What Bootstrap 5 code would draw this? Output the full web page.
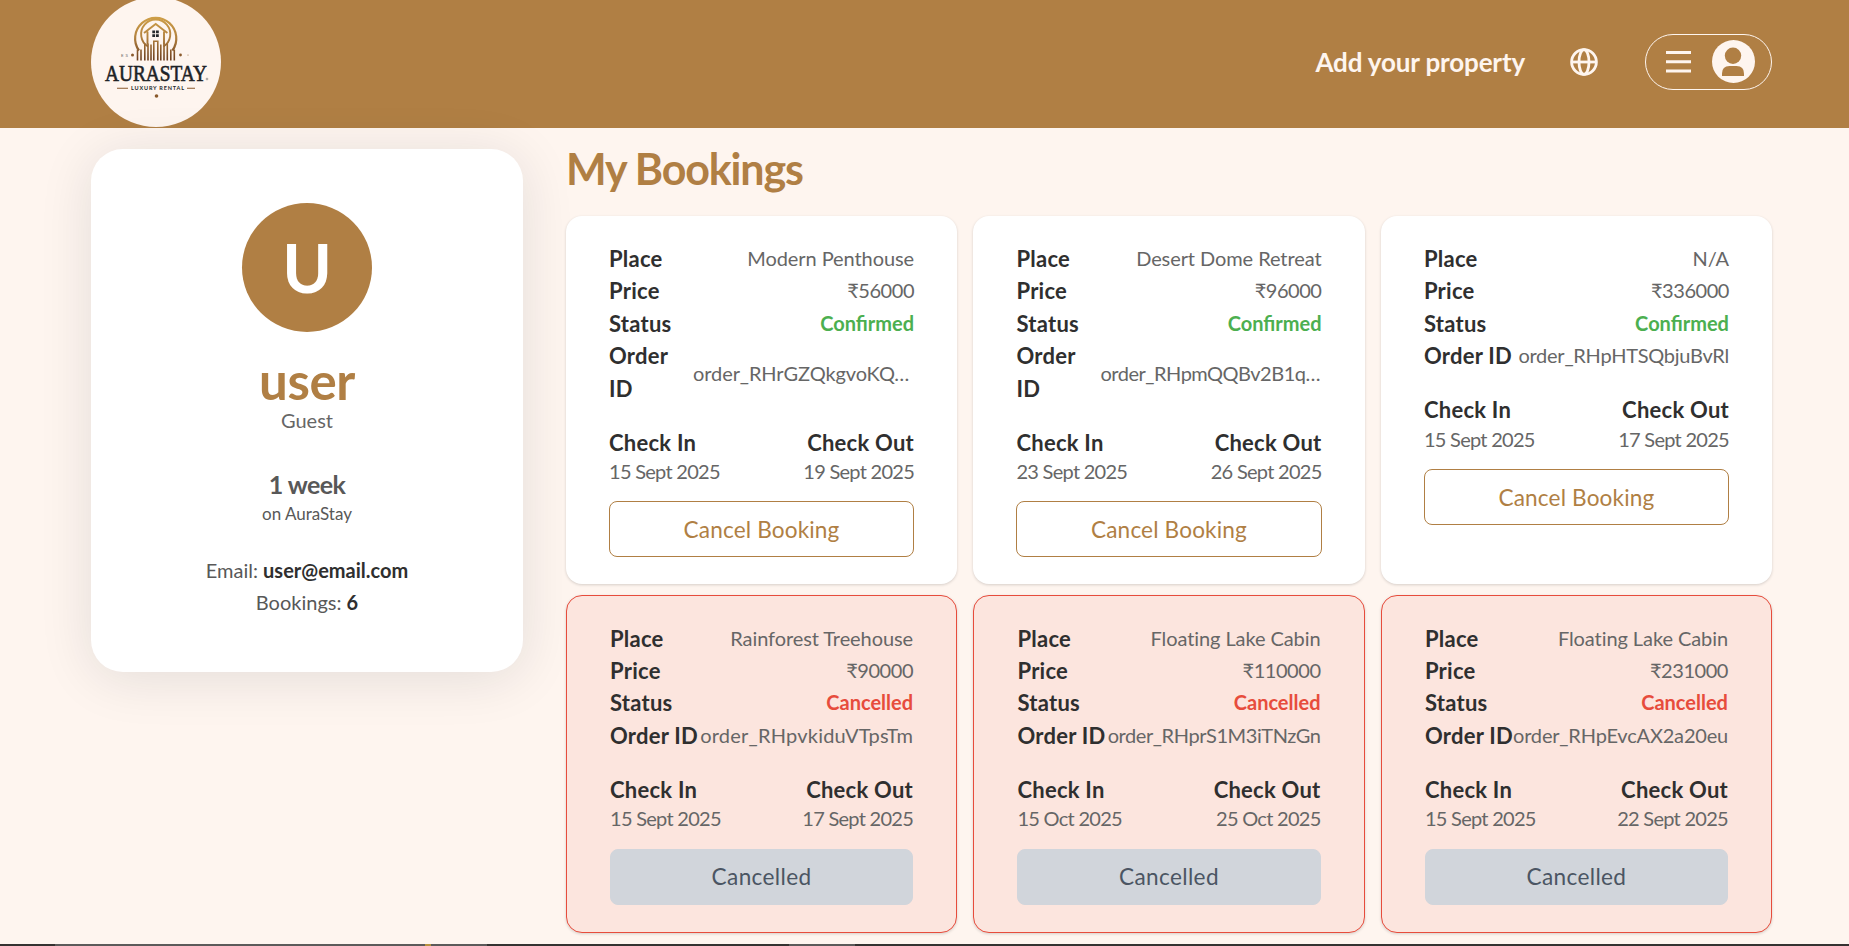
<!DOCTYPE html>
<html lang="en">
<head>
<meta charset="utf-8">
<title>AuraStay – My Bookings</title>
<meta name="viewport" content="width=device-width, initial-scale=1">
<link href="https://cdn.jsdelivr.net/npm/bootstrap@5.3.0/dist/css/bootstrap.min.css" rel="stylesheet">
<style>
:root{--brand:#b07f44;--cream:#fef5ef;--ink:#2f2f2f;--soft:#666}
html,body{height:946px;overflow:hidden}
body{background:var(--cream);font-family:Lato,"Open Sans",sans-serif;color:var(--ink);font-size:20px;line-height:32.4px}
.topbar{height:128px;background:var(--brand);padding:0 77px 4px 91px;color:var(--cream)}
.logo{width:130px;height:130px;margin-top:-1px;background:var(--cream)}
.logo svg{display:block;overflow:visible}
.add-link{font-size:26px;font-weight:700;letter-spacing:-.15px;color:var(--cream);margin-right:45px}
.menu-pill{width:127px;height:56px;border:1px solid var(--cream);padding:0 16px 0 20px;margin-left:47px}
.menu-pill .face{margin-bottom:1px}
.page{padding:21px 77px 0 91px;gap:43px;height:816px}
.profile{width:432px;height:523px;flex:none;border-radius:32px;background:#fff;padding-top:54px;box-shadow:0 6px 54px rgba(10,30,50,.11);color:#585858}
.avatar{width:130px;height:129px;background:var(--brand);color:#fff;font-size:67px;line-height:1;font-weight:700}
.uname{font-size:51px;font-weight:700;line-height:56px;letter-spacing:-.4px;color:var(--brand);margin-top:21px}
.guest{line-height:26px;color:var(--soft);margin-top:-2px}
.weeks{font-size:25px;font-weight:700;line-height:34px;letter-spacing:-.6px;margin-top:34px}
.onsite{font-size:17px;line-height:22px;margin-top:2px}
.contact{margin-top:29px}
.contact b{color:var(--ink)}
h1.title{font-size:43px;font-weight:700;letter-spacing:-1.15px;color:var(--brand);line-height:40px;margin:0 0 27px}
.bookings{display:grid;grid-template-columns:repeat(3,minmax(0,1fr));gap:10.2px 16.4px}
.booking{border-radius:16px;background:#fff;padding:27px 43px;box-shadow:0 1px 3px rgba(0,0,0,.16)}
.booking.off{background:#fce5de;border:1px solid #e74c3c}
.lbl{font-size:22px;font-weight:700;letter-spacing:.25px}
.val{color:var(--soft);white-space:nowrap;letter-spacing:-.08px;line-height:30px}
.price{letter-spacing:-.45px}
.ok,.bad{font-weight:700;line-height:31px}
.ok{color:#4caf50}
.bad{color:#e74c3c}
.narrow{width:60px}
.clip{width:221px}
.dates{margin-top:21.6px}
.dates .val{height:26.4px;line-height:24px;letter-spacing:-.72px}
.act{width:100%;height:56px;margin-top:16px;border-radius:8px;font-size:22.6px;letter-spacing:.15px;line-height:53px;padding:0;border:1px solid var(--brand);color:var(--brand)}
.off .act{background:#d1d5db;border-color:#d1d5db;color:#4b5563;letter-spacing:.35px}
.strip{height:2px;background:linear-gradient(90deg,#353231 55px,#5c5a5a 55px 425px,#b8913f 425px 431px,#5c5a5a 431px 487px,#353231 487px 789px,#5c5a5a 789px 855px,#353231 855px)}
</style>
</head>
<body>
<header class="topbar d-flex align-items-center">
  <div class="logo rounded-circle flex-shrink-0">
    <svg width="130" height="130" viewBox="0 0 130 130">
      <defs><linearGradient id="gold" gradientUnits="userSpaceOnUse" x1="0" y1="14" x2="0" y2="61"><stop offset="0" stop-color="#d3a449"/><stop offset=".5" stop-color="#b3823f"/><stop offset="1" stop-color="#6d3f20"/></linearGradient></defs>
      <g transform="translate(0 2.500)">
      <g fill="none" stroke="url(#gold)" stroke-width="1.900">
        <path d="M48 51A20.600 20.600 0 1 1 81.400 51" stroke-width="2.200"/>
        <path d="M57 47A14.600 14.600 0 1 1 72.400 47"/>
        <path d="M53 33.500l11.700-9L76.400 33.500M56.500 32v13M73 32v13"/>
      </g>
      <path fill="url(#gold)" d="M45.700 50h1.600v11h-1.600zM49.200 50h1.600v11h-1.600zM53 44h1.600v17H53zM56.200 44h1.600v17h-1.600zM59.200 45h1.600v16h-1.600zM62 41h1.600v20H62zM66 41h1.600v20H66zM69 45h1.600v16H69zM72.200 44h1.600v17h-1.600zM75.500 44h1.600v17h-1.600zM79 50h1.600v11H79zM82.500 50h1.600v11h-1.600zM62 41h5.500v1.500H62z"/>
      <path fill="#25292b" d="M61.300 31h2.800v2.800h-2.800zM65 31h2.800v2.800H65zM61.300 34.700h2.800v2.800h-2.800zM65 34.700h2.800v2.800H65z"/>
      <g fill="#8a5a2c"><circle cx="41.500" cy="55.500" r="1.500"/><circle cx="89.500" cy="55.500" r="1.400"/><circle cx="97" cy="55.500" r=".5"/><circle cx="65.500" cy="96.500" r="1.800"/><path d="M26 88.200h11v1H26zM96 88.200h8v1h-8z"/></g>
      <text x="14" y="81.500" textLength="102" lengthAdjust="spacingAndGlyphs" font-family="Liberation Serif,serif" font-size="23" fill="#1d2226" stroke="#1d2226" stroke-width=".6">AURASTAY</text>
      <circle cx="116" cy="79.500" r=".9" fill="none" stroke="#555" stroke-width=".5"/>
      <text x="40" y="90.500" textLength="53" font-family="Lato,sans-serif" font-weight="700" font-size="5.500" fill="#25292b">LUXURY RENTAL</text>
      <text x="30" y="57.200" textLength="7" font-family="Lato,sans-serif" font-size="4.500" fill="#666">ES</text>
      </g>
    </svg>
  </div>
  <a class="add-link ms-auto text-decoration-none" href="#">Add your property</a>
  <svg width="28" height="28" viewBox="0 0 28 28" fill="none" stroke="#fef5ef" stroke-width="2.800"><circle cx="14" cy="14" r="12.400"/><ellipse cx="14" cy="14" rx="5" ry="12.400"/><path d="M1.500 14h25"/></svg>
  <div class="menu-pill rounded-pill d-flex align-items-center justify-content-between">
    <svg width="25" height="22" viewBox="0 0 25 22" fill="#fef5ef"><path d="M0 0h25v3H0zM0 9.300h25v3H0zM0 18.600h25v3H0z"/></svg>
    <svg class="face" width="43" height="43" viewBox="0 0 43 43"><circle cx="21.500" cy="21.500" r="21.500" fill="#fef5ef"/><circle cx="21" cy="15.800" r="8.200" fill="#b07f44"/><path fill="#b07f44" d="M10 36v-2.500q0-7.500 7.500-7.500h7q7.500 0 7.500 7.500V36z"/></svg>
  </div>
</header>
<main class="page d-flex align-items-start">
  <aside class="profile text-center">
    <div class="avatar rounded-circle mx-auto d-flex align-items-center justify-content-center">U</div>
    <div class="uname">user</div>
    <div class="guest">Guest</div>
    <div class="weeks">1 week</div>
    <div class="onsite">on AuraStay</div>
    <div class="contact"><div>Email: <b>user@email.com</b></div><div>Bookings: <b>6</b></div></div>
  </aside>
  <section class="flex-grow-1">
    <h1 class="title">My Bookings</h1>
    <div class="bookings" id="bookings"></div>
  </section>
</main>
<div class="strip"></div>
<script>
// place, price, order id, check-in, check-out, confirmed, two-line id, id tracking
const rows=[
 ["Modern Penthouse","56000","order_RHrGZQkgvoKQ…","15 Sept 2025","19 Sept 2025",1,1,-.1],
 ["Desert Dome Retreat","96000","order_RHpmQQBv2B1q…","23 Sept 2025","26 Sept 2025",1,1,-.5],
 ["N/A","336000","order_RHpHTSQbjuBvRl","15 Sept 2025","17 Sept 2025",1,0,-.25],
 ["Rainforest Treehouse","90000","order_RHpvkiduVTpsTm","15 Sept 2025","17 Sept 2025",0,0,.22],
 ["Floating Lake Cabin","110000","order_RHprS1M3iTNzGn","15 Oct 2025","25 Oct 2025",0,0,-.42],
 ["Floating Lake Cabin","231000","order_RHpEvcAX2a20eu","15 Sept 2025","22 Sept 2025",0,0,-.18]];
document.getElementById("bookings").innerHTML=rows.map(([p,c,o,i,u,ok,wrap,ls])=>`
<article class="booking ${ok?"":"off"}">
 <div class="d-flex justify-content-between"><span class="lbl">Place</span><span class="val">${p}</span></div>
 <div class="d-flex justify-content-between"><span class="lbl">Price</span><span class="val price">₹${c}</span></div>
 <div class="d-flex justify-content-between"><span class="lbl">Status</span><span class="${ok?"ok":"bad"}">${ok?"Confirmed":"Cancelled"}</span></div>
 <div class="d-flex justify-content-between ${wrap?"align-items-center":""}"><span class="lbl ${wrap?"narrow":"text-nowrap"}">Order ID</span><span class="val ${wrap?"clip":""}" style="letter-spacing:${ls}px">${o}</span></div>
 <div class="dates d-flex justify-content-between"><div><div class="lbl">Check In</div><div class="val">${i}</div></div><div class="text-end"><div class="lbl">Check Out</div><div class="val">${u}</div></div></div>
 <button class="btn act">${ok?"Cancel Booking":"Cancelled"}</button>
</article>`).join("");
</script>
<script src="https://cdn.jsdelivr.net/npm/bootstrap@5.3.0/dist/js/bootstrap.bundle.min.js"></script>
</body>
</html>
